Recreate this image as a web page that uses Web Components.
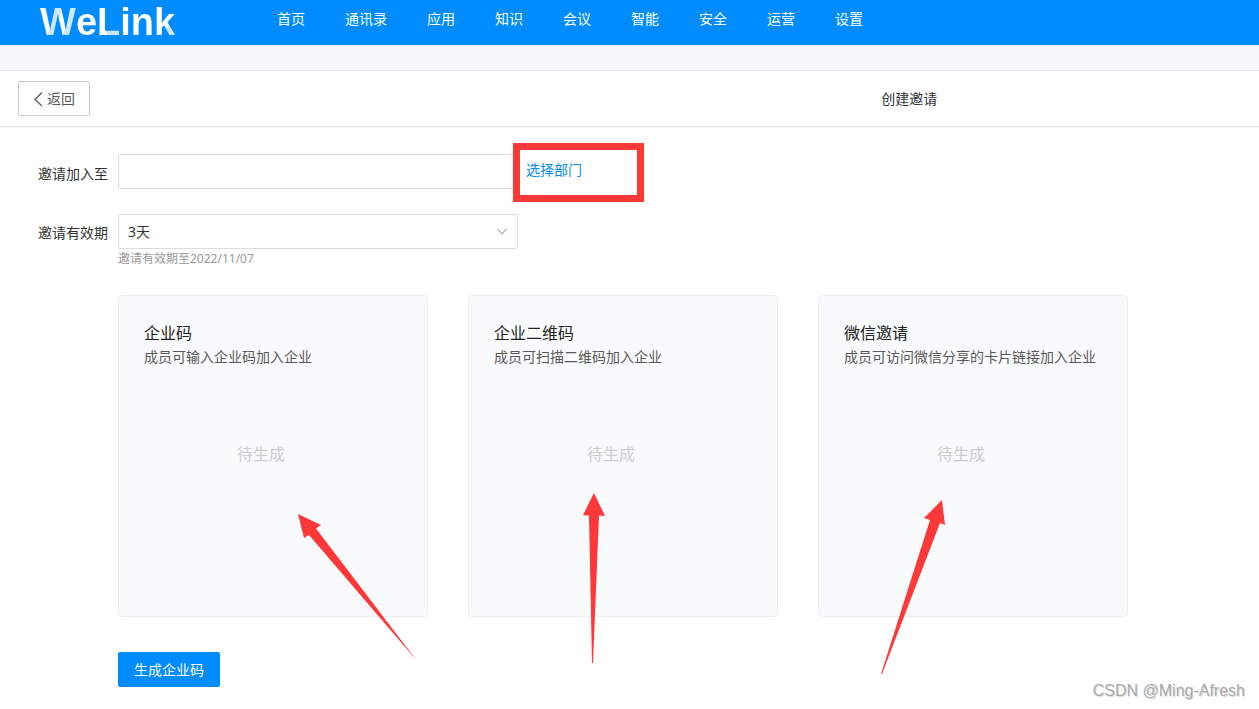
<!DOCTYPE html>
<html lang="zh-CN">
<head>
<meta charset="utf-8">
<title>WeLink 创建邀请</title>
<style>
body { margin: 0; background: #fff; color: #333; font: 14px/20px "Noto Sans", "Noto Sans CJK SC", sans-serif; }
</style>
</head>
<body>
<invite-page></invite-page>
<script>
const define = (name, html) => customElements.define(name, class extends HTMLElement {
  constructor() {
    super();
    const t = document.createElement('template');
    t.innerHTML = html;
    this.attachShadow({ mode: 'open' }).append(t.content);
  }
});

define('brand-logo', `
<style>
:host { display: block; width: 135px; font: 700 38px/44px "Liberation Sans", sans-serif; }
a { display: flex; text-decoration: none; color: #fff; white-space: nowrap; }
span { color: transparent; background: #fff; -webkit-background-clip: text; background-clip: text; }
.w { background: linear-gradient(105deg, #fff 0 36%, #cce8ff 36% 50%, #fff 50% 68%, #cce8ff 68%); -webkit-background-clip: text; background-clip: text; }
.l { background: linear-gradient(90deg, #fff 0 42%, #cce8ff 42%); -webkit-background-clip: text; background-clip: text; }
.k { background: linear-gradient(135deg, #fff 0 62%, #cce8ff 62%); -webkit-background-clip: text; background-clip: text; }
</style>
<a href="#"><span class="w">W</span><span>e</span><span class="l">L</span><span>in</span><span class="k">k</span></a>`);

define('nav-link', `
<style>
:host { display: block; }
a { color: #fff; text-decoration: none; }
</style>
<a href="#"><slot></slot></a>`);

define('top-bar', `
<style>
:host { display: flex; align-items: flex-start; height: 45px; box-sizing: border-box; padding-left: 40px; background: #008cff; }
nav { display: flex; gap: 40px; margin-left: 102px; padding-top: 9px; white-space: nowrap; }
</style>
<brand-logo></brand-logo>
<nav>
<nav-link>首页</nav-link><nav-link>通讯录</nav-link><nav-link>应用</nav-link><nav-link>知识</nav-link><nav-link>会议</nav-link><nav-link>智能</nav-link><nav-link>安全</nav-link><nav-link>运营</nav-link><nav-link>设置</nav-link>
</nav>`);

define('page-heading', `
<style>
:host { display: grid; grid-template-columns: 70% 1fr; align-items: center; border-top: 1px solid #dce5ed; border-bottom: 1px solid #dce5ed; padding: 10px 0; }
button { display: flex; align-items: center; gap: 3px; height: 35px; margin-left: 18px; padding: 0 14px; border: 1px solid #c8c8c8; border-radius: 2px; background: #fff; color: #595959; font: inherit; }
h1 { margin: 0; font: inherit; }
</style>
<div><button type="button"><svg width="11" height="16" viewBox="0 0 11 16" fill="none" stroke="#555" stroke-width="1.2"><path d="M9 1.5 2 8.500l7 6.500"/></svg>返回</button></div>
<h1><slot></slot></h1>`);

define('invite-form', `
<style>
:host { display: grid; grid-template-columns: 70px minmax(0, 400px) auto; column-gap: 10px; align-items: center; justify-content: start; }
label { white-space: nowrap; padding-top: 4px; }
input, select { box-sizing: border-box; display: block; width: 100%; height: 35px; border: 1px solid #dcdcdc; border-radius: 2px; background: #fff; color: #333; font: inherit; padding: 0 9px; appearance: none; outline: none; }
.picker { position: relative; align-self: start; padding: 6px 0 0; }
.picker a { position: relative; display: block; z-index: 1; margin-left: -2px; color: #008cff; text-decoration: none; }
.mark { position: absolute; left: -15px; top: -11px; width: 131px; height: 59px; box-sizing: border-box; border: 7px solid #fd3838; background: #fff; }
.validity { margin-top: 25px; }
label.validity { padding-top: 2px; }
.choice { position: relative; }
.choice svg { position: absolute; right: 10px; top: 12px; pointer-events: none; }
small { grid-column: 2; font-size: 12px; line-height: 20px; color: #999; }
</style>
<label for="dept">邀请加入至</label>
<input id="dept" type="text">
<div class="picker"><span class="mark"></span><a href="#">选择部门</a></div>
<label class="validity" for="days">邀请有效期</label>
<div class="choice validity"><select id="days"><option>3天</option></select><svg width="12" height="12" viewBox="0 0 12 12" fill="none" stroke="#b5b5b5" stroke-width="1.3"><path d="m1.5 3 4.5 5 4.5-5"/></svg></div>
<small>邀请有效期至2022/11/07</small>`);

define('invite-card', `
<style>
:host { position: relative; display: flex; flex-direction: column; box-sizing: border-box; min-height: 322px; padding: 25px; border: 1px solid #eceef0; border-radius: 4px; background: #f9fafc; }
h2 { margin: 0; font-size: 16px; line-height: 24px; font-weight: 400; color: #222; }
p { margin: 0; line-height: 24px; color: #595959; white-space: nowrap; }
.state { margin-top: 73px; padding-right: 24px; text-align: center; font-size: 16px; color: #ccc; }
::slotted(svg) { position: absolute; left: 0; top: 190px; overflow: visible; pointer-events: none; z-index: 1; }
</style>
<h2><slot name="title"></slot></h2>
<p><slot></slot></p>
<p class="state">待生成</p>
<slot name="arrow"></slot>`);

define('invite-page', `
<style>
:host { display: block; position: relative; min-height: 100vh; }
.strip { height: 25px; background: #f5f8fc; }
main { padding: 27px 38px 22px; }
.cards { display: grid; grid-template-columns: repeat(3, minmax(0, 310px)); gap: 40px; margin: 26px 0 35px 80px; }
.submit { display: block; height: 35px; margin-left: 80px; padding: 0 16px; border: 0; border-radius: 2px; background: #008cff; color: #fff; font: inherit; }
.credit { position: absolute; right: 14px; bottom: 7px; font: 16px/22px "Liberation Sans", sans-serif; color: #aaa; text-shadow: 1px 1px 0 #ddd; }
</style>
<top-bar></top-bar>
<div class="strip"></div>
<page-heading>创建邀请</page-heading>
<main>
<invite-form></invite-form>
<section class="cards">
<invite-card><span slot="title">企业码</span>成员可输入企业码加入企业<svg slot="arrow" width="310" height="190" fill="#fd3838"><path d="M179 28 202 39 197 42.500 298 175 190 49 185 52Z"/></svg></invite-card>
<invite-card><span slot="title">企业二维码</span>成员可扫描二维码加入企业<svg slot="arrow" width="310" height="190" fill="#fd3838"><path d="M125 7 136 30 130 29.500 124 177H123L120 29.500 114 29Z"/></svg></invite-card>
<invite-card><span slot="title">微信邀请</span>成员可访问微信分享的卡片链接加入企业<svg slot="arrow" width="310" height="190" fill="#fd3838"><path d="M123 14 126 39 121 37 63 188 62 188 111 34 105 32Z"/></svg></invite-card>
</section>
<button class="submit" type="button">生成企业码</button>
</main>
<div class="credit">CSDN @Ming-Afresh</div>`);
</script>
</body>
</html>
